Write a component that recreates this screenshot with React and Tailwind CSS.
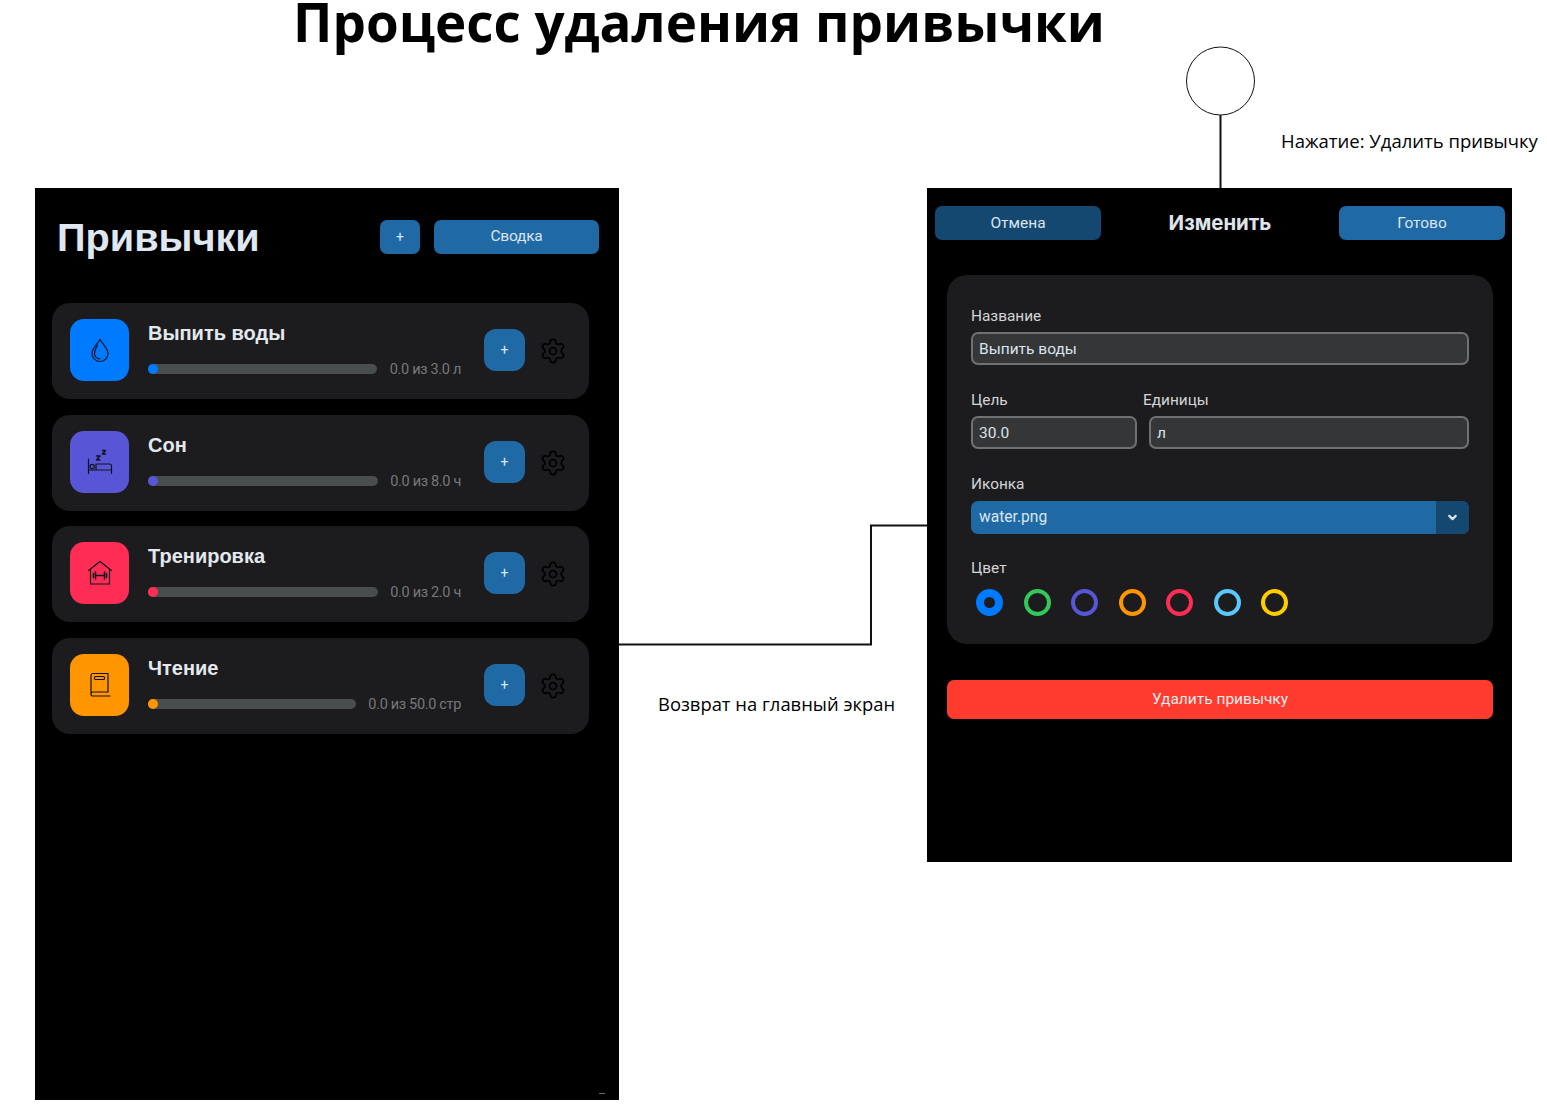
import React from "react";
import { Settings, ChevronDown } from "lucide-react";

const habits = [
  { name: "Выпить воды", value: "0.0 из 3.0 л", bg: "bg-[#007aff]", icon: "water" },
  { name: "Сон", value: "0.0 из 8.0 ч", bg: "bg-[#5856d6]", icon: "sleep" },
  { name: "Тренировка", value: "0.0 из 2.0 ч", bg: "bg-[#ff2d55]", icon: "gym" },
  { name: "Чтение", value: "0.0 из 50.0 стр", bg: "bg-[#ff9500]", icon: "book" },
];

const colors = [
  "border-[#007aff]",
  "border-[#34c759]",
  "border-[#5856d6]",
  "border-[#ff9500]",
  "border-[#ff2d55]",
  "border-[#5ac8fa]",
  "border-[#ffcc00]",
];

function HabitIcon({ type }) {
  const common = {
    width: 26,
    height: 26,
    viewBox: "0 0 26 26",
    fill: "none",
    stroke: "#10131f",
    strokeWidth: 1.2,
    strokeLinejoin: "round",
    strokeLinecap: "round",
  };
  if (type === "water") {
    return (
      <svg {...common}>
        <path d="M13 2.500C11 6.500 5 11 5 16.500a8 8 0 0 0 16 0C21 11 15 6.500 13 2.500Z" />
        <path d="M10.500 8.500C9 11 7.500 13.500 7.500 16.500a5.500 5.500 0 0 0 5.500 5.500" />
      </svg>
    );
  }
  if (type === "sleep") {
    return (
      <svg {...common}>
        <path d="M1.500 10v14.500M1.500 21h23M24.500 24.500V17a2 2 0 0 0-2-2H9v6" />
        <circle cx="5.200" cy="17.500" r="2.200" />
        <path d="M9.500 7h3.500l-3.500 4h3.500M15.500 1.500h3l-3 3.500h3" strokeWidth="1.500" />
      </svg>
    );
  }
  if (type === "gym") {
    return (
      <svg {...common}>
        <path d="M1.500 10.500 13 1.500l11.500 9M3.500 9v15h19V9" />
        <path d="M9.500 15.500h7M6.500 13.500v4M8.500 12v7M17.500 12v7M19.500 13.500v4" strokeWidth="1.500" />
      </svg>
    );
  }
  return (
    <svg {...common}>
      <path d="M4 21.500V3.500a2 2 0 0 1 2-2H21v18.500H6a2 2 0 0 0-2 1.500a2 2 0 0 0 2 2.500H23" />
      <rect x="7.500" y="4.500" width="10" height="3" rx="1" />
    </svg>
  );
}

function HabitCard({ habit }) {
  return (
    <div className="flex h-[96px] items-start rounded-[18px] bg-[#1c1c1e] pl-[18px] pr-[22px]">
      <div className={`mt-[16px] flex h-[62px] w-[59px] shrink-0 items-center justify-center rounded-[14px] ${habit.bg}`}>
        <HabitIcon type={habit.icon} />
      </div>
      <div className="ml-[19px] flex h-full min-w-0 flex-1 flex-col">
        <div className="mt-[17px] font-['Liberation_Sans',sans-serif] text-[20px] leading-[26px] font-bold text-[#e3e8ee]">
          {habit.name}
        </div>
        <div className="mt-[14px] flex items-center gap-[12.500px]">
          <div className="h-[10px] flex-1 rounded-full bg-[#4a4d4f]">
            <div className={`h-[10px] w-[10px] rounded-full ${habit.bg}`} />
          </div>
          <span className="mt-[2px] shrink-0 font-['Roboto',sans-serif] text-[14.500px] leading-[16px] tracking-[-0.33px] text-[#77787a]">
            {habit.value}
          </span>
        </div>
      </div>
      <button className="ml-[23px] mt-[26px] flex h-[42px] w-[41px] shrink-0 items-center justify-center rounded-[12px] bg-[#1f6aa5] pt-[1px] font-['Roboto',sans-serif] text-[14px] text-[#dce4ee]">
        +
      </button>
      <Settings className="ml-[14px] mt-[34px] h-[28px] w-[28px] shrink-0 text-black" strokeWidth={1.500} />
    </div>
  );
}

function Label({ children, className = "" }) {
  return <div className={`h-[24px] text-[15.400px] leading-[22px] text-[#d4d4d6] ${className}`}>{children}</div>;
}

function TextInput({ value, className = "" }) {
  return (
    <input
      readOnly
      value={value}
      className={`mt-[3px] h-[33px] rounded-[7px] border-2 border-[#6f7071] bg-[#343638] px-[6px] text-[15.500px] text-[#dce4ee] outline-none ${className}`}
    />
  );
}

export default function App() {
  return (
    <div className="relative h-[1115px] w-[1547px] overflow-hidden bg-white font-['Roboto',sans-serif]">
      <h1 className="absolute left-[293px] top-[1px] font-['Open_Sans',sans-serif] text-[52.900px] leading-[40px] font-bold whitespace-nowrap text-black">
        Процесс удаления привычки
      </h1>

      {/* connectors */}
      <svg className="absolute left-0 top-0" width="1547" height="1115" fill="none">
        <circle cx="1220.500" cy="81" r="34" stroke="#111" strokeWidth="1" />
        <path d="M1220.500 115V188" stroke="#111" strokeWidth="2" />
        <path d="M619 644.500H871V525.500H927" stroke="#111" strokeWidth="2" />
      </svg>
      <div className="absolute left-[1281px] top-[128px] font-['Open_Sans',sans-serif] text-[18.500px] leading-[26px] whitespace-nowrap text-black">
        Нажатие: Удалить привычку
      </div>
      <div className="absolute left-[658px] top-[691px] font-['Open_Sans',sans-serif] text-[18.400px] leading-[26px] whitespace-nowrap text-black">
        Возврат на главный экран
      </div>

      {/* main screen */}
      <div className="absolute left-[35px] top-[188px] h-[912px] w-[584px] bg-black">
        <div className="flex h-[115px] items-start pl-[22px] pr-[20px]">
          <div className="mt-[23px] flex-1 font-['Liberation_Sans',sans-serif] text-[39.700px] leading-[52px] font-bold text-[#dfe7f0]">
            Привычки
          </div>
          <button className="mt-[32px] h-[34px] w-[40px] rounded-[7px] bg-[#1f6aa5] text-[14px] text-[#dce4ee]">+</button>
          <button className="ml-[14px] mt-[32px] h-[34px] w-[165px] rounded-[7px] bg-[#1f6aa5] text-[15.500px] tracking-[-0.2px] text-[#dce4ee]">
            Сводка
          </button>
        </div>
        <div className="mx-[17px] flex w-[537px] flex-col gap-[15.700px]">
          {habits.map((h) => (
            <HabitCard key={h.name} habit={h} />
          ))}
        </div>
        <div className="absolute bottom-[6px] right-[14px] h-[1px] w-[6px] bg-[#666]" />
      </div>

      {/* edit screen */}
      <div className="absolute left-[927px] top-[188px] h-[674px] w-[585px] bg-black pl-[8px] pr-[7px]">
        <div className="flex h-[87px] items-start pt-[18px]">
          <button className="h-[34px] w-[166px] rounded-[7px] bg-[#144870] pt-[1px] text-[15.500px] text-[#dce4ee]">Отмена</button>
          <div className="flex-1 text-center font-['Inter',sans-serif] text-[20.400px] leading-[34px] font-bold text-[#dfe4ea]">
            Изменить
          </div>
          <button className="h-[34px] w-[166px] rounded-[7px] bg-[#1f6aa5] pt-[1px] text-[15.500px] text-[#dce4ee]">Готово</button>
        </div>

        <div className="ml-[12px] mr-[12px] h-[369px] rounded-[20px] bg-[#1c1c1e] px-[24px] pt-[30px]">
          <Label>Название</Label>
          <TextInput value="Выпить воды" className="w-full" />
          <div className="mt-[24px] flex">
            <div className="w-[166px] shrink-0">
              <Label>Цель</Label>
              <TextInput value="30.0" className="w-full" />
            </div>
            <div className="ml-[6px] flex-1">
              <Label>Единицы</Label>
              <TextInput value="л" className="ml-[6px] w-[320px]" />
            </div>
          </div>
          <Label className="mt-[24px]">Иконка</Label>
          <div className="mt-[4px] flex h-[33px] overflow-hidden rounded-[7px] bg-[#1f6aa5]">
            <div className="flex-1 pl-[8px] text-[15.600px] leading-[33px] text-[#dce4ee]">water.png</div>
            <div className="flex w-[33px] items-center justify-center bg-[#144870]">
              <ChevronDown className="h-[13px] w-[13px] text-[#dce4ee]" strokeWidth={4} />
            </div>
          </div>
          <Label className="mt-[23px]">Цвет</Label>
          <div className="ml-[5px] mt-[8px] flex gap-[20.500px]">
            {colors.map((c, i) => (
              <div
                key={c}
                className={`h-[27px] w-[27px] rounded-full ${c} ${i === 0 ? "border-[8px]" : "border-[4px]"}`}
              />
            ))}
          </div>
        </div>

        <button className="ml-[12px] mt-[36px] h-[39px] w-[546px] rounded-[7px] bg-[#ff3b30] text-[15.500px] text-[#f5ecea]">
          Удалить привычку
        </button>
      </div>
    </div>
  );
}
